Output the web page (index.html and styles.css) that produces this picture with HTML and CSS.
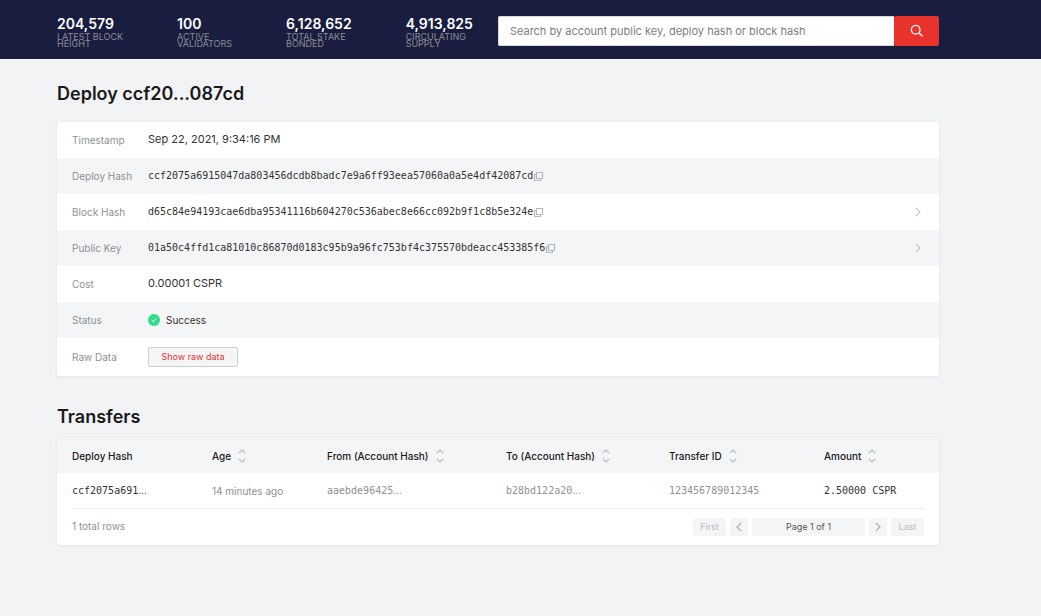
FILE: index.html
```html
<!DOCTYPE html>
<html lang="en">
<head>
<meta charset="utf-8">
<title>Deploy ccf20...087cd</title>
<link rel="stylesheet" href="styles.css">
</head>
<body>
<svg class="sprite" aria-hidden="true">
  <symbol id="copy" viewBox="0 0 11 11"><path d="M3.500 1.500h6v6h-6zM3 3.500H1.500v6h6V8" fill="none" stroke="currentColor" stroke-width="1.200"/></symbol>
  <symbol id="next" viewBox="0 0 6 10"><path d="M.8.8 5 5 .8 9.200" fill="none" stroke="currentColor" stroke-width="1.200"/></symbol>
  <symbol id="sort" viewBox="0 0 8 14"><path d="M.8 4.200 4 1l3.200 3.200M.8 9.800 4 13l3.200-3.200" fill="none" stroke="currentColor" stroke-width="1.100"/></symbol>
</svg>
<header class="topbar">
  <dl class="stats">
    <div class="stat"><dd>204,579</dd><dt>Latest block<br>height</dt></div>
    <div class="stat"><dd>100</dd><dt>Active<br>validators</dt></div>
    <div class="stat"><dd>6,128,652</dd><dt>Total stake<br>bonded</dt></div>
    <div class="stat"><dd>4,913,825</dd><dt>Circulating<br>supply</dt></div>
  </dl>
  <form class="search">
    <input type="text" aria-label="Search" placeholder="Search by account public key, deploy hash or block hash">
    <button type="button" aria-label="Search"><svg width="14" height="14" viewBox="0 0 14 14"><path d="M10 5.700a4.300 4.300 0 1 1-8.600 0 4.300 4.300 0 0 1 8.600 0zM9 9l3.500 3.200" fill="none" stroke="#fff" stroke-width="1.300"/></svg></button>
  </form>
</header>
<main class="page">
  <h1>Deploy ccf20...087cd</h1>
  <dl class="card details">
    <div class="row"><dt>Timestamp</dt><dd>Sep 22, 2021, 9:34:16 PM</dd></div>
    <div class="row"><dt>Deploy Hash</dt><dd class="mono">ccf2075a6915047da803456dcdb8badc7e9a6ff93eea57060a0a5e4df42087cd<button class="copy" aria-label="Copy deploy hash"><svg width="11" height="11"><use href="#copy"/></svg></button></dd></div>
    <div class="row"><dt>Block Hash</dt><dd class="mono">d65c84e94193cae6dba95341116b604270c536abec8e66cc092b9f1c8b5e324e<button class="copy" aria-label="Copy block hash"><svg width="11" height="11"><use href="#copy"/></svg></button></dd><dd class="go"><a href="#block" aria-label="Open block"><svg width="6" height="10"><use href="#next"/></svg></a></dd></div>
    <div class="row"><dt>Public Key</dt><dd class="mono">01a50c4ffd1ca81010c86870d0183c95b9a96fc753bf4c375570bdeacc453385f6<button class="copy" aria-label="Copy public key"><svg width="11" height="11"><use href="#copy"/></svg></button></dd><dd class="go"><a href="#account" aria-label="Open account"><svg width="6" height="10"><use href="#next"/></svg></a></dd></div>
    <div class="row"><dt>Cost</dt><dd>0.00001 CSPR</dd></div>
    <div class="row"><dt>Status</dt><dd class="status"><svg width="12" height="12" viewBox="0 0 12 12"><circle cx="6" cy="6" r="6" fill="#2fdc8c"/><path d="m3.700 6 1.600 1.600 3-3" fill="none" stroke="#fff"/></svg>Success</dd></div>
    <div class="row"><dt>Raw Data</dt><dd><button class="raw">Show raw data</button></dd></div>
  </dl>
  <h2>Transfers</h2>
  <section class="card">
    <table class="transfers">
      <colgroup><col class="c1"><col class="c2"><col class="c3"><col class="c4"><col class="c5"><col class="c6"></colgroup>
      <thead>
        <tr>
          <th>Deploy Hash</th>
          <th><span>Age<svg width="8" height="14"><use href="#sort"/></svg></span></th>
          <th><span>From (Account Hash)<svg width="8" height="14"><use href="#sort"/></svg></span></th>
          <th><span>To (Account Hash)<svg width="8" height="14"><use href="#sort"/></svg></span></th>
          <th><span>Transfer ID<svg width="8" height="14"><use href="#sort"/></svg></span></th>
          <th><span>Amount<svg width="8" height="14"><use href="#sort"/></svg></span></th>
        </tr>
      </thead>
      <tbody>
        <tr>
          <td class="code">ccf2075a691<i>...</i></td>
          <td class="muted">14 minutes ago</td>
          <td class="code muted">aaebde96425<i>...</i></td>
          <td class="code muted">b28bd122a20<i>...</i></td>
          <td class="code muted">123456789012345</td>
          <td class="code">2.50000 CSPR</td>
        </tr>
      </tbody>
    </table>
    <div class="footer">
      <span class="total">1 total rows</span>
      <nav class="pager" aria-label="Pages">
        <button disabled>First</button>
        <button class="step" disabled aria-label="Previous"><svg class="prev" width="6" height="10"><use href="#next"/></svg></button>
        <span class="current">Page 1 of 1</span>
        <button class="step" disabled aria-label="Next"><svg width="6" height="10"><use href="#next"/></svg></button>
        <button disabled>Last</button>
      </nav>
    </div>
  </section>
</main>
</body>
</html>
```
FILE: styles.css
```css
* { box-sizing: border-box; }
body { margin: 0; background: #f1f3f5; color: #1a1a1a; font: 11px/16px Inter, sans-serif; }
button, input { font: inherit; margin: 0; }
button { cursor: pointer; }
dl, dd, h1, h2 { margin: 0; }
.sprite { position: absolute; width: 0; height: 0; }
.topbar { display: flex; align-items: flex-start; gap: 25px; padding: 16px 102px 12px 57px; background: #191d3f; }
.stats { display: flex; gap: 54px; }
.stat { display: flex; flex-direction: column; gap: 2px; }
.stat dd { color: #fff; font-size: 14px; font-weight: 600; line-height: 15px; }
.stat dt { color: #8c8d92; font-size: 9px; line-height: 7px; text-transform: uppercase; white-space: nowrap; }
.search { display: flex; flex: 1; height: 30px; }
.search input { flex: 1; min-width: 0; padding: 0 11px; border: 1px solid #d6d8dc; border-right: 0; border-radius: 2px 0 0 2px; background: #fff; }
.search input::placeholder { color: #7b7e84; opacity: 1; }
.search button { display: grid; place-items: center; width: 45px; padding: 0; border: 0; border-radius: 2px; background: #e7332b; }
.page { padding: 24px 102px 40px 57px; }
h1, h2 { font-size: 18px; font-weight: 600; line-height: 22px; }
h1 { margin-bottom: 17px; }
h2 { margin: 30px 0 10px; }
.card { overflow: hidden; border-radius: 3px; background: #fff; box-shadow: 0 1px 3px #dfe2e6; }
.row { display: flex; align-items: center; min-height: 36px; padding: 0 15px; }
.row:nth-child(even) { background: #f4f5f7; }
.row:last-child { min-height: 38px; }
.row dt { width: 76px; color: #8d9094; font-size: 10px; }
.row dd { padding-bottom: 2px; color: #333; }
.row .mono { display: flex; align-items: center; padding-bottom: 0; font-family: "DejaVu Sans Mono", monospace; font-size: 10px; }
.copy { display: flex; padding: 0; border: 0; background: none; color: #b5b7ba; }
.row .go { margin-left: auto; padding: 0 3px 0 0; }
.go a { display: flex; color: #c4c6c9; }
.row .status { display: flex; align-items: center; gap: 6px; padding-bottom: 0; font-size: 10px; }
.row:last-child dd { padding-bottom: 0; }
.raw { display: block; height: 20px; width: 90px; padding: 0; border: 1px solid #cdd0d6; border-radius: 2px; background: #f4f5f7; color: #e7332b; font-size: 9px; }
.transfers { width: 100%; table-layout: fixed; border-collapse: collapse; }
.c1 { width: 155px; }
.c2 { width: 115px; }
.c3 { width: 179px; }
.c4 { width: 163px; }
.c5 { width: 155px; }
.transfers th, .transfers td { height: 35px; padding: 0; text-align: left; white-space: nowrap; font-size: 10px; }
.transfers th:first-child, .transfers td:first-child { padding-left: 15px; }
.transfers th { background: #f4f5f7; font-weight: 500; }
.transfers th span { display: flex; align-items: center; gap: 7px; }
.transfers svg { color: #b5b7ba; }
.transfers td { color: #333; }
.transfers .muted { color: #8d9094; }
.transfers .code { font-family: "DejaVu Sans Mono", monospace; }
.transfers i { font-family: Inter, sans-serif; font-style: normal; }
.footer { display: flex; align-items: flex-start; justify-content: space-between; margin: 0 15px; padding: 9px 0; border-top: 1px solid #eeeff1; }
.total { color: #8d9094; font-size: 10px; }
.pager { display: flex; gap: 4px; font-size: 9px; }
.pager button, .current { display: grid; place-items: center; min-width: 33px; height: 18px; padding: 0 6px; border: 0; border-radius: 3px; background: #f4f5f7; color: #b9bbbf; }
.pager .current { width: 113px; color: #555; }
.pager .step { min-width: 18px; color: #aaacb0; }
.prev { transform: rotate(180deg); }
```
